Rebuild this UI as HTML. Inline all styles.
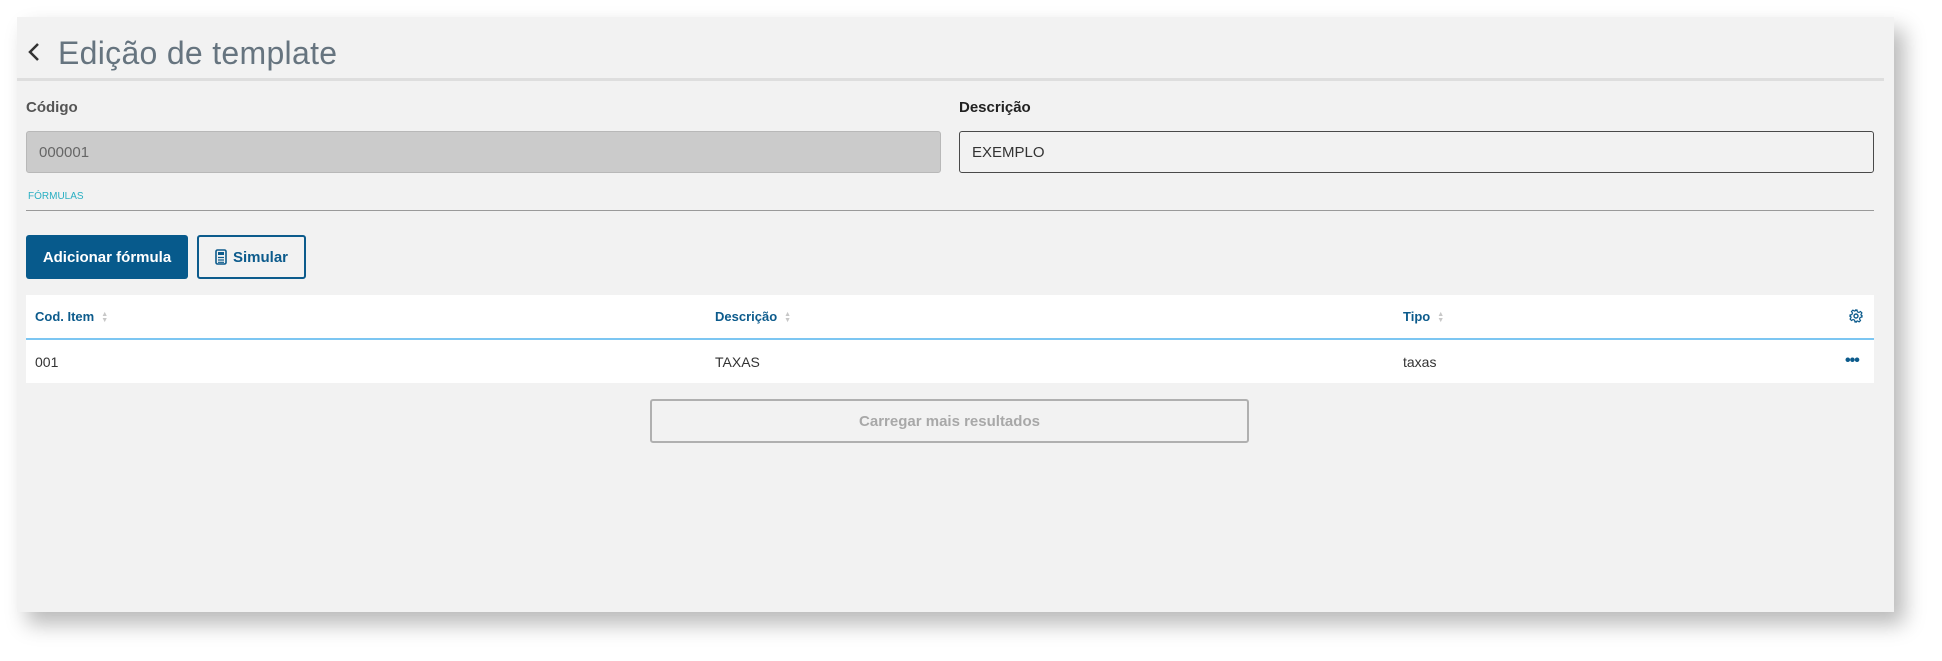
<!DOCTYPE html>
<html><head><meta charset="utf-8"><style>
*{box-sizing:border-box;margin:0;padding:0}
body{width:1942px;height:661px;background:#fff;font-family:"Liberation Sans",sans-serif;position:relative;overflow:hidden}
.panel{position:absolute;left:17px;top:17px;width:1877px;height:595px;background:#f2f2f2;box-shadow:10px 12px 20px rgba(0,0,0,.28)}
.abs{position:absolute}
.title{left:41px;top:18px;font-size:32px;color:#66747f;font-weight:300;letter-spacing:0.3px}
.back{left:10px;top:25px}
.hr{left:0;top:61px;width:1867px;height:3px;background:#dedede}
.lbl{font-size:15px;font-weight:bold;color:#4a4a4a}
.inp{height:42px;border-radius:3px;font-size:15px;color:#333;padding:12px 12px}
.btn{height:44px;border-radius:3px;font-size:15px;font-weight:bold;display:flex;align-items:center;justify-content:center}
.th{font-size:13px;font-weight:bold;color:#0c5b8c}
.td{font-size:14px;color:#333}
.sort{display:inline-block;margin-left:7px;color:#c8c8c8;font-size:7px;line-height:6px;vertical-align:middle}
</style></head><body>
<div class="panel">
 <svg class="abs back" width="14" height="20" viewBox="0 0 14 20"><path d="M11 2 L3 10 L11 18" fill="none" stroke="#333" stroke-width="2.5"/></svg>
 <div class="abs title">Edição de template</div>
 <div class="abs hr"></div>
 <div class="abs lbl" style="left:9px;top:82px;color:#555">Código</div>
 <div class="abs lbl" style="left:942px;top:82px;color:#222">Descrição</div>
 <div class="abs inp" style="left:9px;top:114px;width:915px;background:#cbcbcb;border:1px solid #b8b8b8;color:#666">000001</div>
 <div class="abs inp" style="left:942px;top:114px;width:915px;background:#f2f2f2;border:1px solid #4a4a4a">EXEMPLO</div>
 <div class="abs" style="left:11px;top:174px;font-size:10px;color:#29afc2">FÓRMULAS</div>
 <div class="abs" style="left:9px;top:193px;width:1848px;height:1px;background:#9a9a9a"></div>
 <div class="abs btn" style="left:9px;top:218px;width:162px;background:#075a8c;color:#fff">Adicionar fórmula</div>
 <div class="abs btn" style="left:180px;top:218px;width:109px;border:2px solid #0c5b8c;color:#0c5b8c;background:#f2f2f2">
  <svg width="12" height="16" viewBox="0 0 12 16" style="margin-right:6px"><rect x="1" y="1" width="10" height="14" rx="1.5" fill="none" stroke="#0c5b8c" stroke-width="1.6"/><rect x="3" y="3" width="6" height="3" fill="#0c5b8c"/><path d="M3 8.5h6M3 11h6M3 13.3h6" stroke="#0c5b8c" stroke-width="1.2"/></svg>Simular</div>
 <div class="abs" style="left:9px;top:278px;width:1848px;height:88px;background:#fff"></div>
 <div class="abs" style="left:9px;top:321px;width:1848px;height:2px;background:#7cc6f2"></div>
 <div class="abs th" style="left:18px;top:292px">Cod. Item<span class="sort">▲<br>▼</span></div>
 <div class="abs th" style="left:698px;top:292px">Descrição<span class="sort">▲<br>▼</span></div>
 <div class="abs th" style="left:1386px;top:292px">Tipo<span class="sort">▲<br>▼</span></div>
 <svg class="abs" style="left:1832px;top:292px" width="14" height="14" viewBox="0 0 14 14"><circle cx="7" cy="7" r="2" fill="none" stroke="#0c5b8c" stroke-width="1.4"/><path d="M6 1h2l.4 1.8 1.5.7 1.6-1 1.4 1.4-1 1.6.7 1.5L13 6v2l-1.8.4-.7 1.5 1 1.6-1.4 1.4-1.6-1-1.5.7L8 13H6l-.4-1.8-1.5-.7-1.6 1-1.4-1.4 1-1.6-.7-1.5L1 8V6l1.8-.4.7-1.5-1-1.6 1.4-1.4 1.6 1 1.5-.7z" fill="none" stroke="#0c5b8c" stroke-width="1.2"/></svg>
 <div class="abs td" style="left:18px;top:337px">001</div>
 <div class="abs td" style="left:698px;top:337px">TAXAS</div>
 <div class="abs td" style="left:1386px;top:337px">taxas</div>
 <div class="abs" style="left:1828px;top:335px;font-size:16px;font-weight:bold;color:#0c5b8c;letter-spacing:-1px">•••</div>
 <div class="abs btn" style="left:633px;top:382px;width:599px;height:44px;border:2px solid #b0b0b0;color:#a8a8a8;background:#f2f2f2">Carregar mais resultados</div>
</div>
</body></html>
